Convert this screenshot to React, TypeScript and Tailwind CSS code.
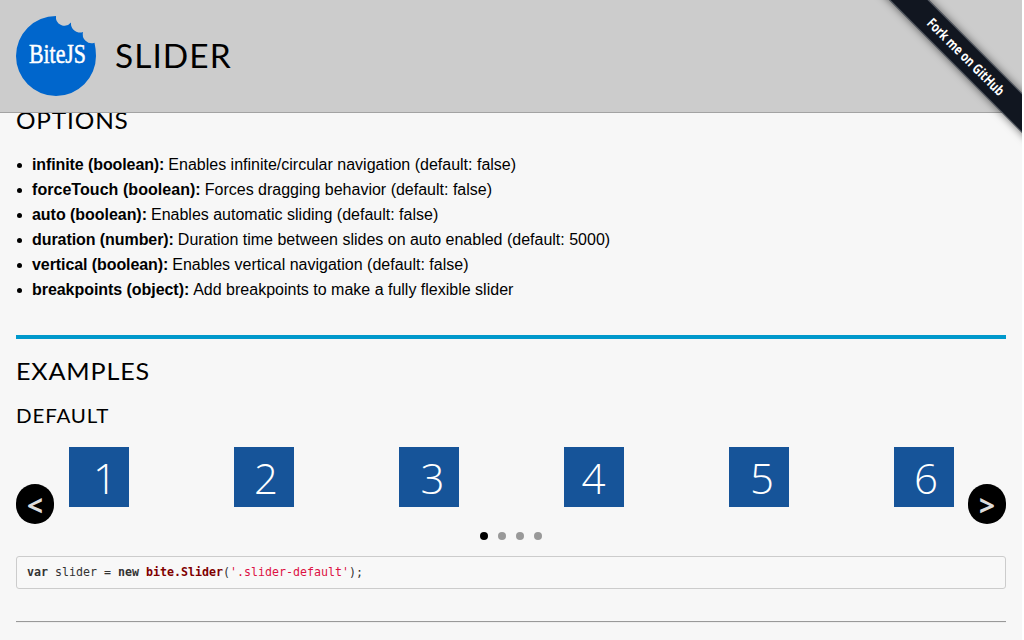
import React from "react";

const options = [
  { name: "infinite (boolean):", text: "Enables infinite/circular navigation (default: false)", bold: "tracking-[-0.1px]" },
  { name: "forceTouch (boolean):", text: "Forces dragging behavior (default: false)", bold: "tracking-[0.05px]" },
  { name: "auto (boolean):", text: "Enables automatic sliding (default: false)", bold: "tracking-[-0.04px]" },
  { name: "duration (number):", text: "Duration time between slides on auto enabled (default: 5000)", bold: "tracking-[-0.07px]" },
  { name: "vertical (boolean):", text: "Enables vertical navigation (default: false)", bold: "tracking-[-0.08px]" },
  { name: "breakpoints (object):", text: "Add breakpoints to make a fully flexible slider", bold: "tracking-[-0.05px]" },
];

const slides = [
  { n: 1, pad: "pl-[13px]" },
  { n: 2, pad: "pl-[5px]" },
  { n: 3, pad: "pl-[8px]" },
  { n: 4, pad: "pl-0" },
  { n: 5, pad: "pl-[7px]" },
  { n: 6, pad: "pl-[5px]" },
];

function Logo() {
  return (
    <svg width="80" height="80" viewBox="0 0 80 80" role="img" aria-label="BiteJS">
      <path d="M40 0A40 40 0 1 0 80 40Q80 33.500 78.500 26.800A9 9 0 0 1 67 16A9 9 0 0 1 55 6.500A8.500 8.500 0 0 1 40 0Z" fill="#06c" />
      <text x="13" y="47" textLength="57" lengthAdjust="spacingAndGlyphs" fill="#fff" stroke="#fff" strokeWidth="0.5" fontSize="27" className="font-['Liberation_Serif',serif]">
        BiteJS
      </text>
    </svg>
  );
}

function Ribbon() {
  return (
    <a className="absolute left-[846px] top-[43px] z-20 flex h-[28px] w-[240px] rotate-45 items-center justify-center border-y border-[#555b65] bg-[#111620] font-['Open_Sans',sans-serif] text-[14px] font-bold leading-none text-white shadow-[0_0_9px_rgba(0,0,0,0.6)]">
      <span className="inline-block scale-x-[0.78] whitespace-nowrap">Fork me on GitHub</span>
    </a>
  );
}

function Arrow({ children }: { children: string }) {
  return (
    <button className="flex h-10 w-[38px] shrink-0 items-center justify-center rounded-full bg-black pt-[2px] font-['Open_Sans',sans-serif] text-[28px] font-bold leading-none text-[#ddd]">
      {children}
    </button>
  );
}

export default function App() {
  return (
    <div className="h-[640px] w-[1024px] overflow-hidden bg-white">
      <div className="relative h-[640px] w-[1022px] overflow-hidden bg-[#f7f7f7] font-['Liberation_Sans',sans-serif] text-black">
        <header className="relative z-10 flex h-[113px] items-center gap-[19px] border-b border-[#a3a3a3] bg-[#ccc] pl-4">
          <Logo />
          <h1 className="origin-left scale-x-[1.045] font-['Lato',sans-serif] text-[32px] leading-[40px] tracking-[1px]">SLIDER</h1>
        </header>
        <Ribbon />
        <main className="-mt-[8px] px-4">
          <h2 className="h-[30px] origin-left scale-x-[1.018] font-['Lato',sans-serif] text-[24px] leading-[30px] tracking-[0.8px]">OPTIONS</h2>
          <ul className="mt-[17px]">
            {options.map((o) => (
              <li key={o.name} className="flex h-[25px] items-center text-[16px] leading-[25px]">
                <span className="ml-px mr-[10px] mt-[2px] size-[5px] rounded-full bg-black" />
                <strong className={o.bold}>{o.name}</strong>
                <span className="ml-1">{o.text}</span>
              </li>
            ))}
          </ul>
          <hr className="mt-[33px] h-1 border-0 bg-[#0099cc]" />
          <h2 className="mt-[17px] h-[30px] origin-left scale-x-[1.047] font-['Lato',sans-serif] text-[24px] leading-[30px] tracking-[0.8px]">EXAMPLES</h2>
          <h3 className="mt-[18px] h-[24px] origin-left scale-x-[1.07] font-['Lato',sans-serif] text-[19.2px] leading-[24px] tracking-[0.8px]">DEFAULT</h3>
          <section className="mt-[19px] flex h-[77px] justify-between">
            <div className="flex items-end"><Arrow>&lt;</Arrow></div>
            <div className="flex gap-[105px]">
              {slides.map((s) => (
                <div key={s.n} className={"flex size-[60px] items-center justify-center bg-[#165499] pt-[2px] font-['Open_Sans',sans-serif] text-[42px] font-light leading-none text-white " + s.pad}>
                  {s.n}
                </div>
              ))}
            </div>
            <div className="flex items-end"><Arrow>&gt;</Arrow></div>
          </section>
          <div className="mt-[8px] flex h-2 justify-center gap-[10px]">
            <i className="size-2 rounded-full bg-black" />
            <i className="size-2 rounded-full bg-[#999]" />
            <i className="size-2 rounded-full bg-[#999]" />
            <i className="size-2 rounded-full bg-[#999]" />
          </div>
          <pre className="mt-4 h-[33px] rounded-[3px] border border-[#ccc] bg-[#f8f8f8] px-[10px] font-['DejaVu_Sans_Mono',monospace] text-[11.63px] leading-[31px] text-[#333]">
            <b>var</b> slider = <b>new</b> <b className="text-[#800000]">bite.Slider</b>(<span className="text-[#dd1144]">'.slider-default'</span>);
          </pre>
          <hr className="mt-8 h-0.5 border-t border-b border-t-[#999] border-b-[#eee]" />
        </main>
      </div>
    </div>
  );
}
